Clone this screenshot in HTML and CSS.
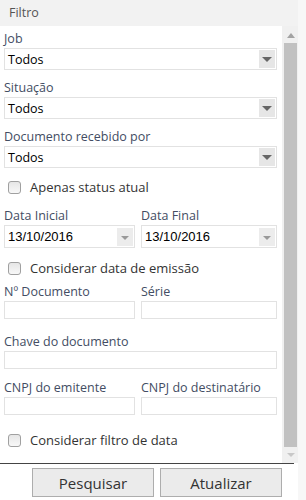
FILE: index.html
```html
<!DOCTYPE html>
<html lang="pt-BR">
<head>
    <meta charset="UTF-8">
    <meta name="viewport" content="width=device-width, initial-scale=1.0">
    <title>Filtro</title>
    <link rel="stylesheet" href="styles.css">
</head>
<body>

<div class="page">
    <div class="filter">
        <div class="filter-title">Filtro</div>

        <div class="filter-body">
            <div class="filter-content">
                <div class="field f-job">
                    <label>Job</label>
                    <div class="select"><span>Todos</span><span class="arrow"></span></div>
                </div>
                <div class="field f-sit">
                    <label>Situação</label>
                    <div class="select"><span>Todos</span><span class="arrow"></span></div>
                </div>
                <div class="field f-doc">
                    <label>Documento recebido por</label>
                    <div class="select"><span>Todos</span><span class="arrow"></span></div>
                </div>

                <div class="check c-status"><span class="box"></span>Apenas status atual</div>

                <div class="row r-datas">
                    <div class="field">
                        <label>Data Inicial</label>
                        <div class="select date"><span>13/10/2016</span><span class="arrow light"></span></div>
                    </div>
                    <div class="field">
                        <label>Data Final</label>
                        <div class="select date"><span>13/10/2016</span><span class="arrow light"></span></div>
                    </div>
                </div>

                <div class="check c-emissao"><span class="box"></span>Considerar data de emissão</div>

                <div class="row r-numero">
                    <div class="field">
                        <label>Nº Documento</label>
                        <div class="input"></div>
                    </div>
                    <div class="field">
                        <label>Série</label>
                        <div class="input"></div>
                    </div>
                </div>

                <div class="field f-chave">
                    <label>Chave do documento</label>
                    <div class="input"></div>
                </div>

                <div class="row r-cnpj">
                    <div class="field">
                        <label>CNPJ do emitente</label>
                        <div class="input"></div>
                    </div>
                    <div class="field">
                        <label>CNPJ do destinatário</label>
                        <div class="input"></div>
                    </div>
                </div>

                <div class="check c-filtro"><span class="box"></span>Considerar filtro de data</div>
            </div>

            <!-- barra de rolagem desenhada -->
            <div class="scrollbar">
                <span class="scroll-up"></span>
                <div class="thumb"></div>
                <span class="scroll-down"></span>
            </div>
        </div>

        <div class="actions">
            <button class="btn">Pesquisar</button>
            <button class="btn">Atualizar</button>
        </div>
    </div>
    <div class="side"></div>
</div>

</body>
</html>
```

FILE: styles.css
```css
body {
    margin: 0;
    font-family: 'Open Sans', sans-serif;
    background-color: #fff;
    color: #333;
}

.page {
    display: flex;
    width: 306px;
    height: 500px;
    overflow: hidden;
}

.filter {
    width: 298px;
    display: flex;
    flex-direction: column;
}

.side {
    flex: 1;
    background-color: #f7f7f7;
}

.filter-title {
    height: 26px;
    line-height: 26px;
    padding-left: 9px;
    font-size: 12.5px;
    color: #555;
    background-color: #f2f2f2;
}

.filter-body {
    display: flex;
    height: 437px;
}

.filter-content {
    width: 273px;
    padding: 6px 5px 0 4px;
    background-color: #fff;
}

.field label {
    display: block;
    height: 16px;
    line-height: 14px;
    font-size: 12.5px;
    color: #434d63;
    white-space: nowrap;
}

.select {
    display: flex;
    align-items: center;
    justify-content: space-between;
    height: 20px;
    border: 1px solid #e2e2e2;
    padding: 0 1px 0 3px;
    font-size: 12.5px;
    color: #000;
}

.select.date {
    font-family: 'Liberation Sans', sans-serif;
    font-size: 13px;
    height: 21px;
}

.arrow {
    width: 16px;
    height: 18px;
    background-color: #e6e6e6;
    position: relative;
}

.arrow:after {
    content: "";
    position: absolute;
    left: 3px;
    top: 7px;
    border-width: 5px 5px 0 5px;
    border-style: solid;
    border-color: #666 transparent transparent transparent;
}

.arrow.light {
    background-color: #ececec;
}

.arrow.light:after {
    left: 4px;
    top: 8px;
    border-width: 4px 4px 0 4px;
    border-color: #999 transparent transparent transparent;
}

.input {
    height: 16px;
    border: 1px solid #e2e2e2;
}

.f-sit, .f-doc {
    margin-top: 11px;
}

.row {
    display: flex;
    gap: 6px;
}

.row .field {
    flex: 1;
}

.row .field:first-child {
    flex: 0 0 131px;
}

.check {
    display: flex;
    align-items: center;
    height: 20px;
    padding-left: 4px;
    font-size: 13px;
    color: #333;
}

.box {
    width: 11px;
    height: 11px;
    border: 1px solid #a0a0a0;
    border-radius: 3px;
    background-image: linear-gradient(#e6e6e6, #f8f8f8);
    margin-right: 9px;
}

.c-status {
    margin-top: 9px;
}

.r-datas {
    margin-top: 12px;
}

.c-emissao {
    margin-top: 10px;
}

.r-numero {
    margin-top: 7px;
}

.f-chave {
    margin-top: 16px;
}

.r-cnpj {
    margin-top: 12px;
}

.c-filtro {
    margin-top: 15px;
}

.scrollbar {
    width: 16px;
    background-color: #f0f0f0;
    display: flex;
    flex-direction: column;
    align-items: center;
    padding-left: 1px;
    box-sizing: border-box;
}

.scroll-up, .scroll-down {
    display: block;
    width: 0;
    height: 0;
    border-style: solid;
}

.scroll-up {
    margin-top: 7px;
    border-width: 0 4px 5px 4px;
    border-color: transparent transparent #a3a3a3 transparent;
}

.scroll-down {
    margin-top: 6px;
    border-width: 4px 4px 0 4px;
    border-color: #c8c8c8 transparent transparent transparent;
}

.thumb {
    width: 13px;
    margin-top: 5px;
    height: 404px;
    background-color: #c1c1c1;
}

.actions {
    width: 262px;
    border-top: 1px solid #444;
    margin-right: 4px;
    display: flex;
    gap: 6px;
    padding: 4px 0 0 32px;
}

.btn {
    width: 122px;
    height: 29px;
    font-family: 'Open Sans', sans-serif;
    font-size: 15px;
    color: #333;
    background-color: #ebebeb;
    border: 1px solid #adadad;
    padding: 0;
}
```
